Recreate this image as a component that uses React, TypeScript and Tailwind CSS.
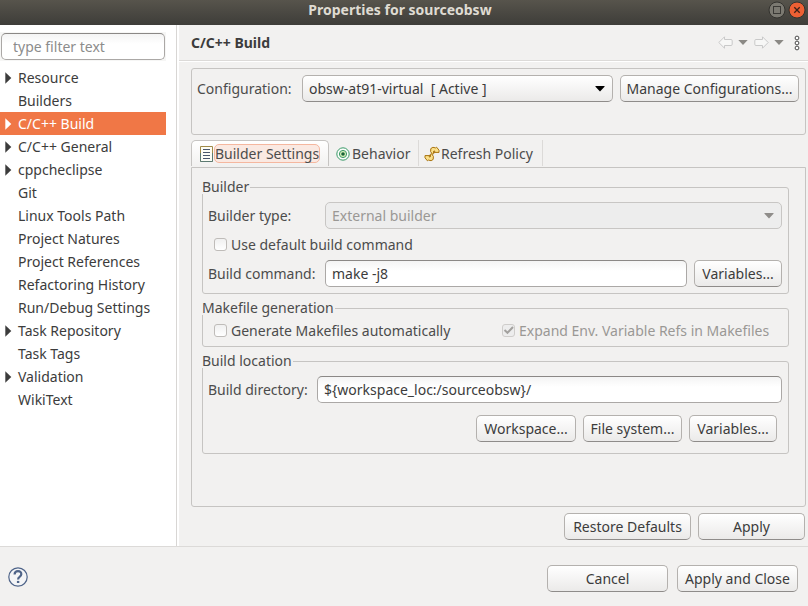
import type { ButtonHTMLAttributes, InputHTMLAttributes, ReactNode } from "react";
import { clsx } from "clsx";

const treeItems = [
  { label: "Resource", expandable: true },
  { label: "Builders" },
  { label: "C/C++ Build", expandable: true, selected: true },
  { label: "C/C++ General", expandable: true },
  { label: "cppcheclipse", expandable: true },
  { label: "Git" },
  { label: "Linux Tools Path" },
  { label: "Project Natures" },
  { label: "Project References" },
  { label: "Refactoring History" },
  { label: "Run/Debug Settings" },
  { label: "Task Repository", expandable: true },
  { label: "Task Tags" },
  { label: "Validation", expandable: true },
  { label: "WikiText" },
];

function PushButton({ className, ...rest }: ButtonHTMLAttributes<HTMLButtonElement>) {
  return (
    <button
      type="button"
      className={clsx(
        "h-[27px] shrink-0 whitespace-nowrap rounded-[5px] border border-[#b4b1ae] border-b-[#8f8c8a] bg-linear-to-b from-white to-[#ebeae9] text-center leading-5 text-[#3c3c3c]",
        className,
      )}
      {...rest}
    />
  );
}

function TextBox({ className, ...rest }: InputHTMLAttributes<HTMLInputElement>) {
  return (
    <input
      type="text"
      className={clsx(
        "h-[27px] min-w-0 flex-1 rounded-[5px] border border-[#aba8a6] border-t-[#8b8886] bg-linear-to-b from-[#f4f4f4] to-white to-40% text-[#3c3c3c] outline-none",
        className,
      )}
      {...rest}
    />
  );
}

function DropDown({ id, value, disabled }: { id: string; value: string; disabled?: boolean }) {
  return (
    <div className="relative min-w-0 flex-1">
      <select
        id={id}
        disabled={disabled}
        className={clsx(
          "block h-[27px] w-full appearance-none rounded-[5px] border px-1.5 opacity-100",
          disabled
            ? "border-[#c8c6c4] bg-[#ededed] text-[#9a9895]"
            : "border-[#b4b1ae] border-b-[#8f8c8a] bg-linear-to-b from-white to-[#ebeae9] text-[#3c3c3c]",
        )}
      >
        <option>{value}</option>
      </select>
      <svg
        viewBox="0 0 10 6"
        className={clsx(
          "pointer-events-none absolute top-[11px] right-2 h-1.5 w-2.5",
          disabled ? "fill-[#8f8d8a]" : "fill-black",
        )}
      >
        <path d="M0.5 0H9.5V0.8L5 5.6L0.5 0.8Z" />
      </svg>
    </div>
  );
}

function CheckBox({ label, checked, disabled }: { label: string; checked?: boolean; disabled?: boolean }) {
  return (
    <label className={clsx("flex items-center gap-1", disabled && "text-[#9a9895]")}>
      <span className="relative flex">
        <input
          type="checkbox"
          defaultChecked={checked}
          disabled={disabled}
          className={clsx(
            "size-[13px] appearance-none rounded-[3px] border",
            disabled ? "border-[#cfcdcb] bg-[#ededed]" : "border-[#bfbcb9] bg-linear-to-b from-[#f0f0f0] to-white",
          )}
        />
        {checked && (
          <svg viewBox="0 0 13 13" className="pointer-events-none absolute inset-0 size-[13px]">
            <path d="M2.5 6L5.5 8.8L11 3" fill="none" stroke="#a3a19e" strokeWidth="2" />
          </svg>
        )}
      </span>
      {label}
    </label>
  );
}

function Group({ title, className, children }: { title: string; className?: string; children: ReactNode }) {
  return (
    <fieldset className="min-w-0 rounded-[3px] border border-[#c6c4c2]">
      <legend className="-ml-px bg-[#f2f1f0] pr-px leading-[14px]">{title}</legend>
      <div className={clsx("pr-1.5 pl-[5px]", className)}>{children}</div>
    </fieldset>
  );
}

function HistoryArrow({ forward }: { forward?: boolean }) {
  return (
    <svg viewBox="0 0 15 13" className={clsx("h-[13px] w-[15px]", forward && "-scale-x-100")}>
      <path
        d="M0.8 6.5L6.5 0.8V3.5H13Q14.2 3.5 14.2 4.7V8.3Q14.2 9.5 13 9.5H6.5V12.2Z"
        fill="#f7f7f6"
        stroke="#c9c9c9"
        strokeLinejoin="round"
      />
    </svg>
  );
}

function MenuCaret() {
  return (
    <svg viewBox="0 0 10 5" className="h-[5px] w-2.5 fill-[#8b8985]">
      <path d="M0.3 0H9.7L5 5Z" />
    </svg>
  );
}

function TitleBar() {
  return (
    <header className="relative flex h-[25px] shrink-0 items-start justify-center bg-linear-to-b from-[#57544c] to-[#3e3d39] pr-2">
      <h1 className="text-sm leading-5 font-bold text-[#dfdbd2]">Properties for sourceobsw</h1>
      <div className="absolute top-0.5 right-[3px] flex gap-1">
        <button type="button" aria-label="Maximize" className="size-4">
          <svg viewBox="0 0 16 16" className="size-4 overflow-visible">
            <circle cx="8" cy="8" r="8" fill="#7b7971" stroke="#33322e" />
            <rect x="4.5" y="4.5" width="7" height="7" fill="none" stroke="#3a3935" />
          </svg>
        </button>
        <button type="button" aria-label="Close" className="size-4">
          <svg viewBox="0 0 16 16" className="size-4 overflow-visible">
            <circle cx="8" cy="8" r="8" fill="#ee6034" stroke="#33322e" />
            <path d="M5.3 5.3L10.7 10.7M10.7 5.3L5.3 10.7" stroke="#3c2018" strokeWidth="1.3" />
          </svg>
        </button>
      </div>
    </header>
  );
}

function Sidebar() {
  return (
    <nav className="w-[177px] shrink-0 border-r border-[#d8d6d4] bg-white pt-[7px] pr-2.5">
      <div className="flex bg-[#f6f6f5] p-px">
        <TextBox placeholder="type filter text" aria-label="type filter text" className="px-[11px] placeholder:text-[#8c8c8c]" />
      </div>
      <ul className="mt-[5px]">
        {treeItems.map((item) => (
          <li key={item.label}>
            <button
              type="button"
              className={clsx(
                "flex h-[23px] w-full items-center text-left whitespace-nowrap",
                item.selected ? "bg-[#f07746] text-white" : "text-[#3c3c3c]",
              )}
            >
              <span className="w-[18px] shrink-0 pl-[5px]">
                {item.expandable && (
                  <svg viewBox="0 0 7 12" className="h-3 w-[7px] fill-current">
                    <path d="M0.3 0.3L6.3 6L0.3 11.7Z" />
                  </svg>
                )}
              </span>
              {item.label}
            </button>
          </li>
        ))}
      </ul>
    </nav>
  );
}

function TabStrip() {
  return (
    <div role="tablist" className="mt-[5px] flex h-[27px] items-stretch">
      <button
        type="button"
        role="tab"
        aria-selected="true"
        className="mb-px flex w-[138px] items-center gap-px rounded-t-[5px] border border-b-0 border-[#c6c4c2] bg-linear-to-b from-white to-[#f2f1f0] pl-2"
      >
        <svg viewBox="0 0 13 16" className="h-4 w-[13px] shrink-0">
          <path d="M0.5 15.5V0.5H12.5V15.5" fill="#fdfdf6" stroke="#a08a48" />
          <path d="M0.5 7V15.5H12.5V7" fill="none" stroke="#5d7a72" />
          <path d="M3 3.5H10M3 6.5H10M3 9.5H10M3 12.5H10" stroke="#4a566b" />
        </svg>
        <span className="rounded-[5px] border border-[#f5b79f] bg-[#fae9e2] leading-[17px] whitespace-nowrap">
          Builder Settings
        </span>
      </button>
      <button
        type="button"
        role="tab"
        aria-selected="false"
        className="mb-px flex w-[90px] items-center gap-0.5 border-r border-[#dcdad8] pt-px pl-[7px] whitespace-nowrap"
      >
        <svg viewBox="0 0 14 14" className="size-3.5 shrink-0">
          <circle cx="7" cy="7" r="6.2" fill="#fbfdfb" stroke="#3a9968" />
          <circle cx="7" cy="7" r="3.6" fill="#d8efb8" stroke="#3a9968" />
          <circle cx="7" cy="7" r="1.8" fill="#176238" />
        </svg>
        Behavior
      </button>
      <button
        type="button"
        role="tab"
        aria-selected="false"
        className="mb-px flex w-[124px] items-center gap-0.5 border-r border-[#dcdad8] pt-px pl-1.5 whitespace-nowrap"
      >
        <svg viewBox="0 0 14 14" className="size-3.5 shrink-0 overflow-visible" fill="#fbe08a" stroke="#a8730f" strokeLinejoin="round">
          <path d="M5.8 1.6Q7.6 -0.6 10.6 0.9L11.6 0.2L14 3.2V5.4H9L10 4.2Q8.6 3.4 8.4 5L8.8 6.6L7.4 7.2L5.6 4.6Z" />
          <path d="M8.2 12.4Q6.4 14.6 3.4 13.1L2.4 13.8L0 10.8V8.6H5L4 9.8Q5.4 10.6 5.6 9L5.2 7.4L6.6 6.8L8.4 9.4Z" />
        </svg>
        Refresh Policy
      </button>
    </div>
  );
}

function BuilderSettings() {
  return (
    <section
      role="tabpanel"
      className="flex flex-1 flex-col gap-[7px] rounded-b-[3px] border border-[#c6c4c2] pt-3 pr-4 pb-4 pl-2.5"
    >
      <Group title="Builder" className="pt-2 pb-1.5">
        <div className="flex items-center">
          <label htmlFor="builder-type" className="w-[117px]">
            Builder type:
          </label>
          <DropDown id="builder-type" value="External builder" disabled />
        </div>
        <div className="flex h-[31px] items-center pl-1.5">
          <CheckBox label="Use default build command" />
        </div>
        <div className="flex items-center">
          <label htmlFor="build-command" className="w-[117px]">
            Build command:
          </label>
          <TextBox id="build-command" defaultValue="make -j8" className="px-1.5" />
          <PushButton className="ml-[7px] w-[88px]">Variables...</PushButton>
        </div>
      </Group>

      <Group title="Makefile generation">
        <div className="flex h-[31px] items-center pl-1.5">
          <div className="w-72">
            <CheckBox label="Generate Makefiles automatically" />
          </div>
          <CheckBox label="Expand Env. Variable Refs in Makefiles" checked disabled />
        </div>
      </Group>

      <Group title="Build location" className="pt-2 pb-[11px]">
        <div className="flex items-center">
          <label htmlFor="build-directory" className="w-[109px]">
            Build directory:
          </label>
          <TextBox id="build-directory" defaultValue="${workspace_loc:/sourceobsw}/" className="px-1.5" />
        </div>
        <div className="mt-3 flex justify-end gap-[7px] pr-[5px]">
          <PushButton className="w-[100px]">Workspace...</PushButton>
          <PushButton className="w-[99px]">File system...</PushButton>
          <PushButton className="w-[88px]">Variables...</PushButton>
        </div>
      </Group>
    </section>
  );
}

export default function App() {
  return (
    <div className="flex min-h-screen flex-col bg-[#f2f1f0] font-['Noto_Sans',sans-serif] text-sm text-[#4c4c4c]">
      <TitleBar />
      <div className="flex flex-1">
        <Sidebar />
        <main className="flex min-w-0 flex-1 flex-col border-l-2 border-white">
          <div className="flex h-9 items-center justify-between border-b border-[#dcdad8] pr-2 pl-3">
            <h2 className="font-bold text-[#3c3c3c]">C/C++ Build</h2>
            <div className="flex items-center">
              <button type="button" aria-label="Back">
                <HistoryArrow />
              </button>
              <button type="button" aria-label="Back history" className="ml-[5px]">
                <MenuCaret />
              </button>
              <button type="button" aria-label="Forward" className="ml-1.5">
                <HistoryArrow forward />
              </button>
              <button type="button" aria-label="Forward history" className="ml-[5px]">
                <MenuCaret />
              </button>
              <button type="button" aria-label="View menu" className="ml-2.5">
                <svg viewBox="0 0 6 16" className="h-4 w-1.5" fill="#fff" stroke="#4a4a4a">
                  <circle cx="3" cy="3" r="1.9" />
                  <circle cx="3" cy="8" r="1.9" />
                  <circle cx="3" cy="13" r="1.9" />
                </svg>
              </button>
            </div>
          </div>
          <div className="flex flex-1 flex-col border-t border-white pt-1.5 pr-0.5 pb-1.5 pl-3">
            <div className="flex h-[67px] items-start rounded-[3px] border border-[#c6c4c2] pt-1.5 pr-1.5 pl-[5px]">
              <label htmlFor="configuration" className="w-[105px] leading-[27px]">
                Configuration:
              </label>
              <DropDown id="configuration" value={"obsw-at91-virtual\u00a0 [ Active ]"} />
              <PushButton className="ml-[7px] w-[179px]">Manage Configurations...</PushButton>
            </div>
            <TabStrip />
            <BuilderSettings />
            <div className="mt-1.5 flex justify-end gap-[7px] pr-px">
              <PushButton className="w-[127px]">Restore Defaults</PushButton>
              <PushButton className="w-[107px]">Apply</PushButton>
            </div>
          </div>
        </main>
      </div>
      <footer className="flex h-[60px] shrink-0 items-center gap-[9px] border-t border-[#dcdad8] pt-1 pr-2.5 pl-2">
        <button type="button" aria-label="Help" className="mr-auto pb-1">
          <svg viewBox="0 0 20 20" className="size-5" fill="none" stroke="#4f6489">
            <circle cx="10" cy="10" r="9.2" fill="#f4f5f7" strokeWidth="1.2" />
            <path d="M6.6 7.4Q6.6 4.2 10 4.2T13.3 7.2Q13.3 8.6 11.6 9.8Q10.1 10.8 10.1 12.4" strokeWidth="2.2" />
            <path d="M10.1 13.9V16" strokeWidth="2.4" />
          </svg>
        </button>
        <PushButton className="w-[121px]">Cancel</PushButton>
        <PushButton className="w-[121px]">Apply and Close</PushButton>
      </footer>
    </div>
  );
}
